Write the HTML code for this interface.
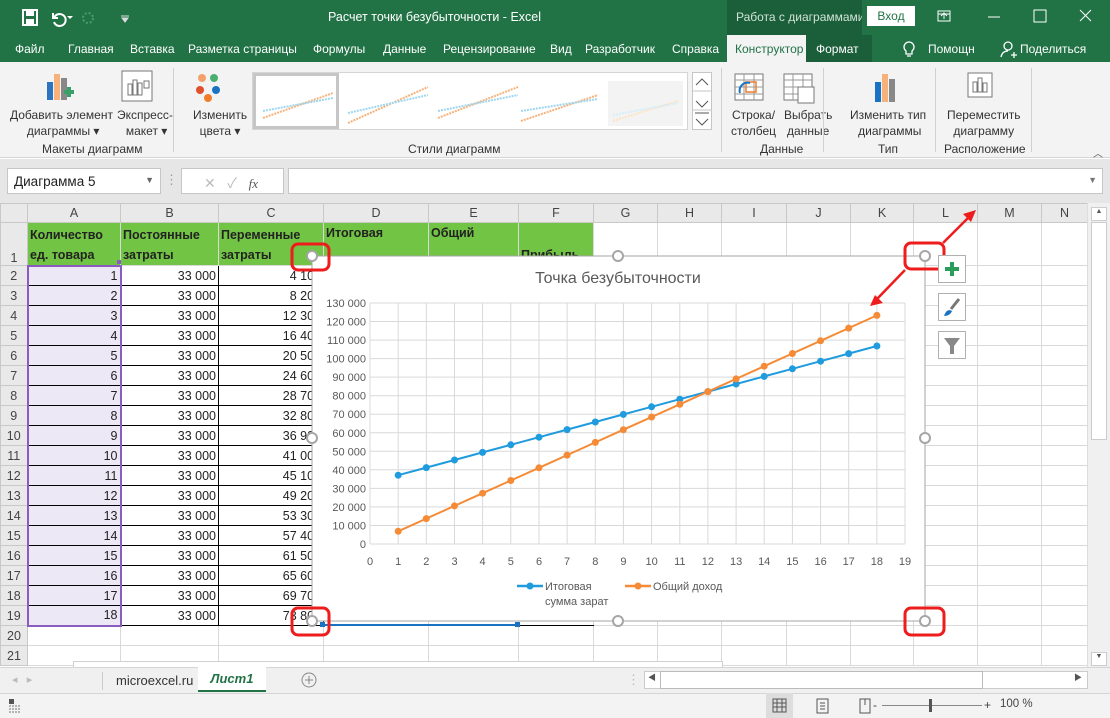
<!DOCTYPE html>
<html><head><meta charset="utf-8"><style>
*{box-sizing:border-box;margin:0;padding:0}
body{width:1110px;height:718px;overflow:hidden;position:relative;background:#fff;font-family:"Liberation Sans","Noto Sans CJK SC",sans-serif;font-size:13px;color:#222}
.a{position:absolute;white-space:nowrap}
#title{left:0;top:0;width:1110px;height:35px;background:#217346}
#tabs{left:0;top:35px;width:1110px;height:27px;background:#217346}
.t{position:absolute;top:42px;color:#fff;font-size:12px}
#rib{left:0;top:62px;width:1110px;height:96px;background:#f3f3f3;border-bottom:1px solid #d5d5d5}
.rl{position:absolute;font-size:12px;color:#333;text-align:center;line-height:16px}
.sep{position:absolute;top:68px;width:1px;height:84px;background:#d0d0d0}
#grid{position:absolute;left:0;top:203px;border-collapse:collapse;table-layout:fixed}
#grid td{border:1px solid #d9d9d9;height:20px;padding:0 2px;font-size:12.5px;overflow:hidden;white-space:nowrap}
#grid tr.h td{height:19px;background:#e9e9e9;text-align:center;color:#444;border-color:#c8c8c8}
#grid td.rh{background:#e9e9e9;text-align:center;color:#444;border-color:#c8c8c8}
#grid td.g{background:#72c444;font-weight:bold;vertical-align:bottom;line-height:20px;white-space:normal}
#grid td.A{background:#ece8f5;text-align:right;border:1px solid #000;border-left:2px solid #8a5cbf;border-right:2px solid #8a5cbf}
#grid td.k{text-align:right;border:1px solid #000}
</style></head><body>
<div class="a" id="title"></div>
<svg class="a" style="left:20px;top:8px" width="120" height="20"><rect x="3" y="2" width="14" height="15" fill="none" stroke="#fff" stroke-width="2"/><rect x="6" y="3" width="8" height="5" fill="#fff"/><rect x="6" y="11" width="8" height="6" fill="#fff"/><path d="M34 10a6 6 0 1 1 0 4M33 5v5h5" fill="none" stroke="#fff" stroke-width="2"/><path d="M47 8l3 3 3-3" fill="#fff"/><circle cx="68" cy="10" r="5" fill="none" stroke="#4f9a6c" stroke-width="2" stroke-dasharray="2 2"/><path d="M101 8h8M102 10l3 4 3-4z" fill="#ddd" stroke="#ddd"/></svg>
<div class="a" style="left:328px;top:10px;color:#fff;font-size:12.5px">Расчет точки безубыточности  -  Excel</div>
<div class="a" style="left:727px;top:0;width:135px;height:35px;background:#1b5e3a;color:#cfe3d6;font-size:12px;padding:10px 0 0 9px;overflow:hidden">Работа с диаграммами</div>
<div class="a" style="left:867px;top:6px;width:48px;height:20px;background:#fff;color:#217346;font-size:12px;text-align:center;line-height:20px">Вход</div>
<svg class="a" style="left:930px;top:5px" width="180" height="25"><rect x="8" y="6" width="12" height="10" fill="none" stroke="#fff"/><path d="M14 14V9M11 11l3-3 3 3M8 9h12" stroke="#fff" fill="none"/><path d="M58 12h12" stroke="#fff"/><rect x="104" y="5" width="12" height="12" fill="none" stroke="#fff"/><path d="M150 5l11 11M161 5l-11 11" stroke="#fff"/></svg>
<div class="a" id="tabs"></div>
<div class="t" style="left:15px">Файл</div><div class="t" style="left:68px">Главная</div><div class="t" style="left:130px">Вставка</div><div class="t" style="left:188px">Разметка страницы</div><div class="t" style="left:313px">Формулы</div><div class="t" style="left:383px">Данные</div><div class="t" style="left:443px">Рецензирование</div><div class="t" style="left:550px">Вид</div><div class="t" style="left:585px">Разработчик</div><div class="t" style="left:672px">Справка</div>
<div class="a" style="left:727px;top:35px;width:79px;height:28px;background:#f3f3f3;color:#217346;font-size:12px;padding:7px 0 0 8px">Конструктор</div>
<div class="a" style="left:806px;top:35px;width:66px;height:27px;background:#1b5e3a;color:#fff;font-size:12px;padding:7px 0 0 10px">Формат</div>
<svg class="a" style="left:900px;top:40px" width="20" height="20"><path d="M6 11a5 5 0 1 1 6 0v3H6z M7 16h4" fill="none" stroke="#fff" stroke-width="1.3"/></svg>
<div class="t" style="left:928px">Помощн</div>
<svg class="a" style="left:1000px;top:40px" width="18" height="20"><circle cx="8" cy="6" r="4" fill="none" stroke="#fff" stroke-width="1.3"/><path d="M1 17c1-5 4-6 7-6M11 15h6M14 12v6" fill="none" stroke="#fff" stroke-width="1.3"/></svg>
<div class="t" style="left:1020px">Поделиться</div>
<div class="a" id="rib"></div>
<svg class="a" style="left:45px;top:70px" width="40" height="36"><rect x="2" y="12" width="6" height="18" fill="#2a74c0"/><rect x="9" y="4" width="6" height="26" fill="#f6b27a"/><rect x="16" y="8" width="6" height="22" fill="#888"/><path d="M19 22h10M24 17v10" stroke="#3aa067" stroke-width="4"/></svg>
<svg class="a" style="left:121px;top:70px" width="40" height="34"><rect x="1" y="1" width="30" height="30" fill="#fff" stroke="#777"/><rect x="7" y="14" width="4" height="11" fill="none" stroke="#777"/><rect x="12" y="10" width="4" height="15" fill="none" stroke="#777"/><rect x="17" y="13" width="4" height="12" fill="none" stroke="#777"/><rect x="23" y="11" width="5" height="7" fill="none" stroke="#777"/></svg>
<div class="rl" style="left:10px;top:107px">Добавить элемент<br>&nbsp;диаграммы ▾</div>
<div class="rl" style="left:117px;top:107px">Экспресс-<br>&nbsp;макет ▾</div>
<div class="rl" style="left:42px;top:141px">Макеты диаграмм</div>
<div class="sep" style="left:173px"></div>
<svg class="a" style="left:192px;top:70px" width="34" height="34"><circle cx="10" cy="8" r="4" fill="#f4a06a"/><circle cx="22" cy="8" r="4" fill="#4caf70"/><circle cx="8" cy="20" r="4" fill="#e0502a"/><circle cx="24" cy="20" r="4" fill="#1a73c2"/><circle cx="16" cy="28" r="4" fill="#f07d2a"/></svg>
<div class="rl" style="left:193px;top:107px">Изменить<br>цвета ▾</div>
<div class="a" style="left:252px;top:72px;width:436px;height:58px;background:#fff;border:1px solid #d5d5d5"></div>
<div class="a" style="left:253px;top:73px;width:86px;height:56px;border:3px solid #c6c6c6;background:#fff"></div>
<svg class="a" style="left:253px;top:73px" width="436" height="56"><g stroke-width="2" stroke-dasharray="2 1"><path d="M10 45L80 20" stroke="#f6b27a"/><path d="M10 38L80 25" stroke="#9fd6ef"/><path d="M95 50L175 14" stroke="#f6b27a"/><path d="M95 40L175 22" stroke="#9fd6ef"/><path d="M185 45L265 14" stroke="#f6b27a"/><path d="M185 38L265 22" stroke="#9fd6ef"/><path d="M268 48L345 22" stroke="#f6b27a"/><path d="M268 38L345 26" stroke="#9fd6ef"/><rect x="355" y="8" width="75" height="45" fill="#f3f3f3" stroke="none"/><path d="M360 48L425 28" stroke="#fde4c6"/><path d="M360 42L425 30" stroke="#d5eef8"/></g></svg>
<div class="a" style="left:692px;top:72px;width:20px;height:58px;background:#fff;border:1px solid #c6c6c6"></div>
<svg class="a" style="left:692px;top:72px" width="20" height="58"><path d="M4 13l6-6 6 6M4 29l6 6 6-6M3 41h14M4 47l6 6 6-6" fill="none" stroke="#555"/><path d="M0 19h20M0 38h20" stroke="#c6c6c6"/></svg>
<div class="rl" style="left:408px;top:141px">Стили диаграмм</div>
<div class="sep" style="left:721px"></div>
<svg class="a" style="left:734px;top:73px" width="90" height="32"><rect x="1" y="1" width="28" height="26" fill="#fff" stroke="#777"/><path d="M1 7h28M1 14h28M1 21h28M10 1v26M20 1v26" stroke="#999"/><rect x="12" y="9" width="10" height="10" fill="none" stroke="#f07d2a" stroke-width="1.5"/><path d="M6 20a8 8 0 0 1 10-10" fill="none" stroke="#1a73c2" stroke-width="2"/><rect x="50" y="1" width="28" height="26" fill="#fff" stroke="#777"/><path d="M50 7h28M50 14h28M50 21h28M59 1v26M69 1v26" stroke="#999"/><rect x="64" y="14" width="16" height="16" fill="#fff" stroke="#777"/></svg>
<div class="rl" style="left:731px;top:107px">Строка/<br>столбец</div>
<div class="rl" style="left:784px;top:107px">Выбрать<br>данные</div>
<div class="rl" style="left:760px;top:141px">Данные</div>
<div class="sep" style="left:823px"></div>
<svg class="a" style="left:872px;top:72px" width="30" height="32"><rect x="3" y="10" width="6" height="20" fill="#1a73c2"/><rect x="10" y="2" width="6" height="28" fill="#f6b27a"/><rect x="17" y="7" width="6" height="23" fill="#888"/></svg>
<div class="rl" style="left:850px;top:107px">Изменить тип<br>&nbsp;диаграммы</div>
<div class="rl" style="left:878px;top:141px">Тип</div>
<div class="sep" style="left:935px"></div>
<svg class="a" style="left:966px;top:72px" width="30" height="32"><rect x="2" y="1" width="24" height="24" fill="#fff" stroke="#777"/><rect x="7" y="10" width="4" height="10" fill="none" stroke="#777"/><rect x="12" y="6" width="4" height="14" fill="none" stroke="#777"/><rect x="17" y="11" width="4" height="9" fill="none" stroke="#777"/></svg>
<div class="rl" style="left:947px;top:107px">Переместить<br>диаграмму</div>
<div class="rl" style="left:944px;top:141px">Расположение</div>
<div class="sep" style="left:1031px"></div>
<div class="a" style="left:1093px;top:145px;font-size:10px;color:#555">︿</div>
<div class="a" style="left:0;top:159px;width:1110px;height:44px;background:#e6e6e6"></div>
<div class="a" style="left:7px;top:168px;width:154px;height:26px;background:#fff;border:1px solid #c6c6c6;padding:5px 0 0 6px;font-size:13.5px">Диаграмма 5<span style="position:absolute;right:6px;top:6px;font-size:9px;color:#666">▼</span></div>
<div class="a" style="left:165px;top:172px;color:#999">⋮</div>
<div class="a" style="left:181px;top:168px;width:103px;height:26px;background:#fff;border:1px solid #c6c6c6;color:#bbb;padding:4px 0 0 22px;font-size:14px">✕ &nbsp;&nbsp;✓ &nbsp;&nbsp;<i style="color:#555;font-family:'Liberation Serif';font-size:13px">fx</i></div>
<div class="a" style="left:288px;top:168px;width:815px;height:26px;background:#fff;border:1px solid #c6c6c6"><span style="position:absolute;right:5px;top:6px;font-size:9px;color:#777">▼</span></div>
<table id="grid">
<colgroup><col style="width:27px"><col style="width:93px"><col style="width:98px"><col style="width:105px"><col style="width:105px"><col style="width:90px"><col style="width:75px"><col style="width:64px"><col style="width:64px"><col style="width:65px"><col style="width:64px"><col style="width:63px"><col style="width:64px"><col style="width:64px"><col style="width:46px"></colgroup>
<tr class="h"><td></td><td>A</td><td>B</td><td>C</td><td>D</td><td>E</td><td>F</td><td>G</td><td>H</td><td>I</td><td>J</td><td>K</td><td>L</td><td>M</td><td>N</td></tr>
<tr style="height:43px"><td class="rh" style="vertical-align:bottom">1</td><td class="g" style="border-bottom:2px solid #8a5cbf">Количество ед. товара</td><td class="g">Постоянные затраты</td><td class="g">Переменные затраты</td><td class="g" style="vertical-align:top">Итоговая</td><td class="g" style="vertical-align:top">Общий</td><td class="g">Прибыль</td><td></td><td></td><td></td><td></td><td></td><td></td><td></td><td></td></tr>
<tr><td class="rh">2</td><td class="A">1</td><td class="k">33 000</td><td class="k">4 100</td><td></td><td></td><td></td><td></td><td></td><td></td><td></td><td></td><td></td><td></td><td></td></tr>
<tr><td class="rh">3</td><td class="A">2</td><td class="k">33 000</td><td class="k">8 200</td><td></td><td></td><td></td><td></td><td></td><td></td><td></td><td></td><td></td><td></td><td></td></tr>
<tr><td class="rh">4</td><td class="A">3</td><td class="k">33 000</td><td class="k">12 300</td><td></td><td></td><td></td><td></td><td></td><td></td><td></td><td></td><td></td><td></td><td></td></tr>
<tr><td class="rh">5</td><td class="A">4</td><td class="k">33 000</td><td class="k">16 400</td><td></td><td></td><td></td><td></td><td></td><td></td><td></td><td></td><td></td><td></td><td></td></tr>
<tr><td class="rh">6</td><td class="A">5</td><td class="k">33 000</td><td class="k">20 500</td><td></td><td></td><td></td><td></td><td></td><td></td><td></td><td></td><td></td><td></td><td></td></tr>
<tr><td class="rh">7</td><td class="A">6</td><td class="k">33 000</td><td class="k">24 600</td><td></td><td></td><td></td><td></td><td></td><td></td><td></td><td></td><td></td><td></td><td></td></tr>
<tr><td class="rh">8</td><td class="A">7</td><td class="k">33 000</td><td class="k">28 700</td><td></td><td></td><td></td><td></td><td></td><td></td><td></td><td></td><td></td><td></td><td></td></tr>
<tr><td class="rh">9</td><td class="A">8</td><td class="k">33 000</td><td class="k">32 800</td><td></td><td></td><td></td><td></td><td></td><td></td><td></td><td></td><td></td><td></td><td></td></tr>
<tr><td class="rh">10</td><td class="A">9</td><td class="k">33 000</td><td class="k">36 900</td><td></td><td></td><td></td><td></td><td></td><td></td><td></td><td></td><td></td><td></td><td></td></tr>
<tr><td class="rh">11</td><td class="A">10</td><td class="k">33 000</td><td class="k">41 000</td><td></td><td></td><td></td><td></td><td></td><td></td><td></td><td></td><td></td><td></td><td></td></tr>
<tr><td class="rh">12</td><td class="A">11</td><td class="k">33 000</td><td class="k">45 100</td><td></td><td></td><td></td><td></td><td></td><td></td><td></td><td></td><td></td><td></td><td></td></tr>
<tr><td class="rh">13</td><td class="A">12</td><td class="k">33 000</td><td class="k">49 200</td><td></td><td></td><td></td><td></td><td></td><td></td><td></td><td></td><td></td><td></td><td></td></tr>
<tr><td class="rh">14</td><td class="A">13</td><td class="k">33 000</td><td class="k">53 300</td><td></td><td></td><td></td><td></td><td></td><td></td><td></td><td></td><td></td><td></td><td></td></tr>
<tr><td class="rh">15</td><td class="A">14</td><td class="k">33 000</td><td class="k">57 400</td><td></td><td></td><td></td><td></td><td></td><td></td><td></td><td></td><td></td><td></td><td></td></tr>
<tr><td class="rh">16</td><td class="A">15</td><td class="k">33 000</td><td class="k">61 500</td><td></td><td></td><td></td><td></td><td></td><td></td><td></td><td></td><td></td><td></td><td></td></tr>
<tr><td class="rh">17</td><td class="A">16</td><td class="k">33 000</td><td class="k">65 600</td><td></td><td></td><td></td><td></td><td></td><td></td><td></td><td></td><td></td><td></td><td></td></tr>
<tr><td class="rh">18</td><td class="A">17</td><td class="k">33 000</td><td class="k">69 700</td><td></td><td></td><td></td><td></td><td></td><td></td><td></td><td></td><td></td><td></td><td></td></tr>
<tr><td class="rh">19</td><td class="A" style="border-bottom:2px solid #8a5cbf">18</td><td class="k">33 000</td><td class="k">73 800</td><td style="border-bottom:1px solid #000"></td><td style="border-bottom:1px solid #000"></td><td style="border-bottom:1px solid #000"></td><td></td><td></td><td></td><td></td><td></td><td></td><td></td><td></td></tr>
<tr><td class="rh">20</td><td></td><td></td><td></td><td></td><td></td><td></td><td></td><td></td><td></td><td></td><td></td><td></td><td></td><td></td></tr>
<tr><td class="rh">21</td><td></td><td></td><td></td><td></td><td></td><td></td><td></td><td></td><td></td><td></td><td></td><td></td><td></td><td></td></tr>
</table>
<div class="a" style="left:1087px;top:203px;width:23px;height:465px;background:#f0f0f0;border-left:1px solid #ddd"></div>
<div class="a" style="left:1091px;top:207px;width:16px;height:14px;background:#fff;border:1px solid #ccc;font-size:7px;text-align:center;color:#555">▲</div>
<div class="a" style="left:1091px;top:222px;width:16px;height:218px;background:#fff;border:1px solid #ccc"></div>
<div class="a" style="left:1091px;top:652px;width:16px;height:14px;background:#fff;border:1px solid #ccc;font-size:7px;text-align:center;color:#555">▼</div>
<svg class="a" style="left:0;top:0" width="1110" height="718">
<g transform="translate(312,256)" font-family="Liberation Sans, sans-serif">
<rect x="0" y="0" width="613" height="365" fill="#fff" stroke="#a6a6a6"/>
<text x="306" y="27" text-anchor="middle" font-size="16" fill="#595959">Точка безубыточности</text>
<g stroke="#d9d9d9" stroke-width="1">
<path d="M58 288H593M58 269.5H593M58 250.9H593M58 232.4H593M58 213.8H593M58 195.3H593M58 176.8H593M58 158.2H593M58 139.7H593M58 121.1H593M58 102.6H593M58 84.1H593M58 65.5H593M58 47H593"/>
<path d="M58 47V288M86.2 47V288M114.3 47V288M142.5 47V288M170.6 47V288M198.8 47V288M227 47V288M255.1 47V288M283.3 47V288M311.4 47V288M339.6 47V288M367.8 47V288M395.9 47V288M424.1 47V288M452.2 47V288M480.4 47V288M508.6 47V288M536.7 47V288M564.9 47V288M593 47V288"/>
</g>
<g font-size="11" fill="#595959" text-anchor="end">
<text x="54" y="292">0</text><text x="54" y="273.5">10 000</text><text x="54" y="255">20 000</text><text x="54" y="236.4">30 000</text><text x="54" y="217.8">40 000</text><text x="54" y="199.3">50 000</text><text x="54" y="180.8">60 000</text><text x="54" y="162.2">70 000</text><text x="54" y="143.7">80 000</text><text x="54" y="125.1">90 000</text><text x="54" y="106.6">100 000</text><text x="54" y="88.1">110 000</text><text x="54" y="69.5">120 000</text><text x="54" y="51">130 000</text>
</g>
<g font-size="11" fill="#595959" text-anchor="middle">
<text x="58" y="309">0</text><text x="86.2" y="309">1</text><text x="114.3" y="309">2</text><text x="142.5" y="309">3</text><text x="170.6" y="309">4</text><text x="198.8" y="309">5</text><text x="227" y="309">6</text><text x="255.1" y="309">7</text><text x="283.3" y="309">8</text><text x="311.4" y="309">9</text><text x="339.6" y="309">10</text><text x="367.8" y="309">11</text><text x="395.9" y="309">12</text><text x="424.1" y="309">13</text><text x="452.2" y="309">14</text><text x="480.4" y="309">15</text><text x="508.6" y="309">16</text><text x="536.7" y="309">17</text><text x="564.9" y="309">18</text><text x="593" y="309">19</text>
</g>
<g fill="#1f9bde" stroke="#1f9bde">
<polyline fill="none" stroke-width="2" points="86.2,219.2 114.3,211.6 142.5,204 170.6,196.4 198.8,188.8 227,181.2 255.1,173.6 283.3,166 311.4,158.4 339.6,150.8 367.8,143.2 395.9,135.6 424.1,128 452.2,120.4 480.4,112.8 508.6,105.2 536.7,97.6 564.9,90"/>
<g stroke="none"><circle cx="86.2" cy="219.2" r="3.5"/><circle cx="114.3" cy="211.6" r="3.5"/><circle cx="142.5" cy="204" r="3.5"/><circle cx="170.6" cy="196.4" r="3.5"/><circle cx="198.8" cy="188.8" r="3.5"/><circle cx="227" cy="181.2" r="3.5"/><circle cx="255.1" cy="173.6" r="3.5"/><circle cx="283.3" cy="166" r="3.5"/><circle cx="311.4" cy="158.4" r="3.5"/><circle cx="339.6" cy="150.8" r="3.5"/><circle cx="367.8" cy="143.2" r="3.5"/><circle cx="395.9" cy="135.6" r="3.5"/><circle cx="424.1" cy="128" r="3.5"/><circle cx="452.2" cy="120.4" r="3.5"/><circle cx="480.4" cy="112.8" r="3.5"/><circle cx="508.6" cy="105.2" r="3.5"/><circle cx="536.7" cy="97.6" r="3.5"/><circle cx="564.9" cy="90" r="3.5"/></g>
</g>
<g fill="#f58b36" stroke="#f58b36">
<polyline fill="none" stroke-width="2" points="86.2,275.3 114.3,262.6 142.5,249.9 170.6,237.2 198.8,224.5 227,211.8 255.1,199.1 283.3,186.4 311.4,173.7 339.6,161 367.8,148.3 395.9,135.6 424.1,122.9 452.2,110.2 480.4,97.5 508.6,84.8 536.7,72.1 564.9,59.4"/>
<g stroke="none"><circle cx="86.2" cy="275.3" r="3.5"/><circle cx="114.3" cy="262.6" r="3.5"/><circle cx="142.5" cy="249.9" r="3.5"/><circle cx="170.6" cy="237.2" r="3.5"/><circle cx="198.8" cy="224.5" r="3.5"/><circle cx="227" cy="211.8" r="3.5"/><circle cx="255.1" cy="199.1" r="3.5"/><circle cx="283.3" cy="186.4" r="3.5"/><circle cx="311.4" cy="173.7" r="3.5"/><circle cx="339.6" cy="161" r="3.5"/><circle cx="367.8" cy="148.3" r="3.5"/><circle cx="395.9" cy="135.6" r="3.5"/><circle cx="424.1" cy="122.9" r="3.5"/><circle cx="452.2" cy="110.2" r="3.5"/><circle cx="480.4" cy="97.5" r="3.5"/><circle cx="508.6" cy="84.8" r="3.5"/><circle cx="536.7" cy="72.1" r="3.5"/><circle cx="564.9" cy="59.4" r="3.5"/></g>
</g>
<path d="M205 330h26" stroke="#1f9bde" stroke-width="2.5"/><circle cx="218" cy="330" r="3.5" fill="#1f9bde"/>
<text x="233" y="334" font-size="11" fill="#595959">Итоговая</text><text x="233" y="349" font-size="11" fill="#595959">сумма зарат</text>
<path d="M313 330h26" stroke="#f58b36" stroke-width="2.5"/><circle cx="326" cy="330" r="3.5" fill="#f58b36"/>
<text x="341" y="334" font-size="11" fill="#595959">Общий доход</text>
</g>
<path d="M323 625H518" stroke="#1a73c2" stroke-width="2"/><rect x="320" y="622" width="5" height="5" fill="#1a73c2"/><rect x="515" y="622" width="5" height="5" fill="#1a73c2"/>
<rect x="117" y="260" width="4" height="4" fill="#8a5cbf"/>
<g fill="#fff" stroke="#a6a6a6" stroke-width="2"><circle cx="312" cy="256" r="5"/><circle cx="618" cy="256" r="5"/><circle cx="925" cy="256" r="5"/><circle cx="312" cy="438" r="5"/><circle cx="925" cy="438" r="5"/><circle cx="312" cy="621" r="5"/><circle cx="618" cy="621" r="5"/><circle cx="925" cy="621" r="5"/></g>
<g fill="none" stroke="#ee1c1c" stroke-width="3"><rect x="292" y="244" width="37" height="26" rx="6"/><rect x="905" y="243" width="39" height="26" rx="6"/><rect x="292" y="608" width="37" height="27" rx="6"/><rect x="905" y="608" width="39" height="27" rx="6"/>
<path d="M943 243L970 216M905 270L876 300" stroke-width="2.5"/></g>
<path d="M976 210l-13 4 8 8z M870 306l13-3-8-8z" fill="#ee1c1c"/>
<g fill="#fff" stroke="#b0b0b0"><rect x="938.5" y="255.5" width="27" height="27"/><rect x="938.5" y="293.5" width="27" height="27"/><rect x="938.5" y="331.5" width="27" height="27"/></g>
<path d="M945 269h14M952 262v14" stroke="#2a9d5c" stroke-width="4"/>
<path d="M959 299l-8 10" stroke="#777" stroke-width="3"/><path d="M944 316c2-6 5-7 8-5-1 3-4 5-8 5z" fill="#1a73c2"/>
<path d="M944 338h16l-6 8v8h-4v-8z" fill="#888"/>
</svg>
<div class="a" style="left:0;top:667px;width:1110px;height:26px;background:#f0f0f0;border-top:1px solid #d5d5d5"></div>
<div class="a" style="left:73px;top:661px;width:650px;height:6px;border:1px solid #d0d0d0;border-bottom:none;background:#fff"></div>
<div class="a" style="left:12px;top:673px;color:#bbb;font-size:11px">◂ &nbsp; ▸</div>
<div class="a" style="left:102px;top:672px;width:1px;height:18px;background:#ccc"></div>
<div class="a" style="left:116px;top:673px;font-size:13px;color:#333">microexcel.ru</div>
<div class="a" style="left:198px;top:667px;width:68px;height:25px;background:#fff;border-bottom:2px solid #217346;color:#217346;font-weight:bold;font-style:italic;font-size:13px;text-align:center;line-height:23px">Лист1</div>
<svg class="a" style="left:300px;top:671px" width="18" height="18"><circle cx="9" cy="9" r="7" fill="none" stroke="#888"/><path d="M5 9h8M9 5v8" stroke="#888"/></svg>
<div class="a" style="left:627px;top:672px;color:#bbb">⋮</div>
<div class="a" style="left:644px;top:671px;width:444px;height:18px;background:#fff;border:1px solid #ccc"></div>
<div class="a" style="left:660px;top:671px;width:323px;height:18px;border:1px solid #bbb;background:#fff"></div>
<div class="a" style="left:1074px;top:672px;font-size:8px;color:#555">▶</div>
<div class="a" style="left:648px;top:672px;font-size:8px;color:#555">◀</div>
<div class="a" style="left:0;top:693px;width:1110px;height:25px;background:#f3f3f3;border-top:1px solid #d5d5d5"></div>
<svg class="a" style="left:8px;top:698px" width="14" height="16"><rect x="1" y="1" width="5" height="5" fill="#555"/><path d="M1 8h12M1 11h12M1 14h12" stroke="#777" stroke-dasharray="2 1"/></svg>
<div class="a" style="left:766px;top:693px;width:27px;height:25px;background:#ddd"></div>
<svg class="a" style="left:770px;top:697px" width="140" height="18"><path d="M3 2h13v13H3zM3 6h13M3 10h13M7 2v13M12 2v13" fill="none" stroke="#555"/><rect x="47" y="2" width="11" height="14" fill="none" stroke="#555"/><path d="M50 6h5M50 9h5M50 12h5" stroke="#555"/><path d="M90 2h10v14H90zM95 2v6" fill="none" stroke="#555"/></svg>
<div class="a" style="left:873px;top:698px;font-size:12px;color:#444">-</div>
<div class="a" style="left:882px;top:705px;width:100px;height:1px;background:#888"></div>
<div class="a" style="left:929px;top:699px;width:3px;height:13px;background:#555"></div>
<div class="a" style="left:984px;top:698px;font-size:12px;color:#444">+</div>
<div class="a" style="left:1000px;top:698px;font-size:11.5px;color:#444">100 %</div>
</body></html>
